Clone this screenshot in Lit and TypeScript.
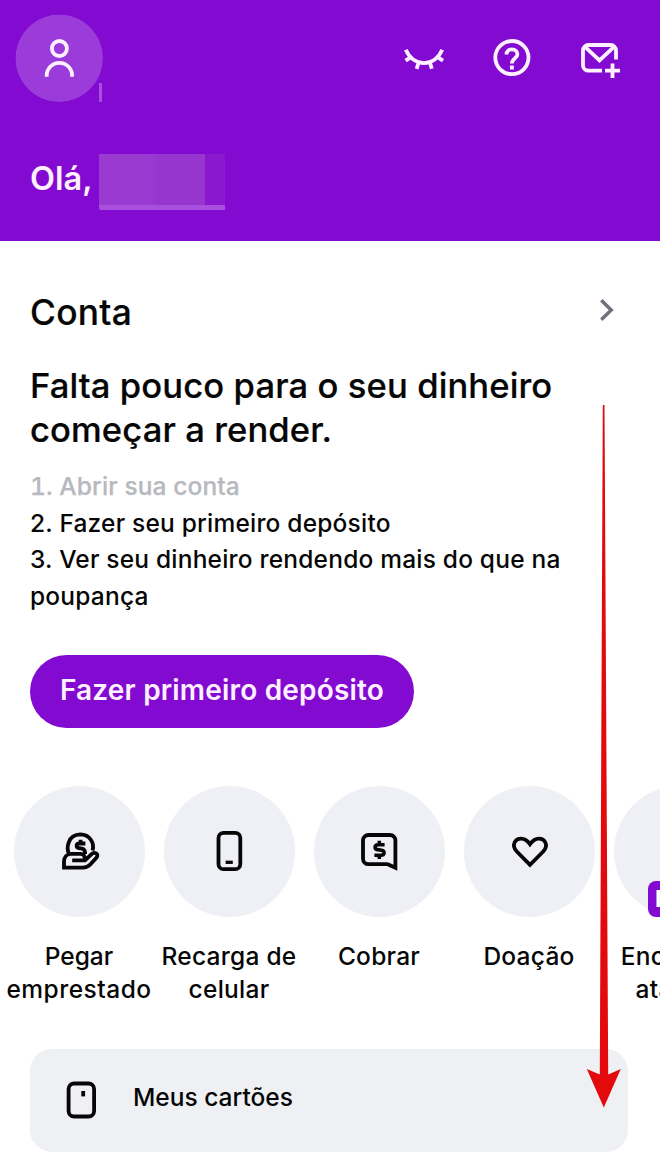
import { LitElement, html, css, svg } from "lit";
import { customElement } from "lit/decorators.js";

const loan = svg`<path d="M69 853.5C66.5 849 67 834.6 80.3 834.4C90 834.6 94.6 843 92.6 850.5"/>
  <path d="M85.4 843.5H79.5C75.8 843.5 75.8 847.8 79 848.2L82.2 848.7C85 849.2 85.2 851.5 85.2 854M80.6 839.8V843"/>
  <path d="M72.2 860.4H85L91.3 854.3C94.5 851.3 99.3 854 96.6 857.6L90.5 864.2C87.8 867 86 867.6 83 867.6H64V861.5C64 857 67 853.8 71.3 853.8H80.5C83.5 853.8 85 856 85 860"/>`;
const phone = svg`<rect x="218.5" y="832.9" width="21.8" height="36.3" rx="5"/><path d="M225.6 862.3H232.8" stroke-width="3.3"/>`;
const charge = svg`<path d="M395.4 867.8V840.5a5.5 5.5 0 0 0-5.5-5.5H368.5a5.5 5.5 0 0 0-5.5 5.5V858.7a5.5 5.5 0 0 0 5.5 5.5H386.5Q388 864.2 389.5 865Z"/>
  <path stroke-width="3.6" d="M384.6 844.8H378.2C374.2 844.8 374.2 849.2 377.5 849.6L381.5 850.2C385 850.8 385 855.2 381 855.2H374.4M379.3 840.8V844.5M379.3 855.5V859"/>`;
const heart = svg`<path d="M530 864.8L516.8 851.5C511 845.2 515 838.6 521.2 838.6C525 838.6 527.5 840.8 530 844.2C532.5 840.8 535 838.6 538.8 838.6C545 838.6 549 845.2 543.2 851.5Z"/>`;

const shortcuts = [
  { box: "14 786 131 131", icon: loan, lines: [["Pegar", "tight"], ["emprestado", "wide"]] },
  { box: "164 786 131 131", icon: phone, lines: [["Recarga de", ""], ["celular", ""]] },
  { box: "314 786 131 131", icon: charge, lines: [["Cobrar", ""]] },
  { box: "464 786 131 131", icon: heart, lines: [["Doação", ""]] },
  { box: "614 786 131 131", icon: svg``, lines: [["Encontrar", ""], ["atalhos", ""]], badge: "NOVO" },
];

@customElement("app-root")
export class AppRoot extends LitElement {
  static styles = css`
    :host { display: block; position: relative; width: 660px; height: 1173px; overflow: hidden; background: #fff; color: #060606; font-family: Inter, "Liberation Sans", sans-serif; font-weight: 500; }
    * { box-sizing: border-box; }
    svg { display: block; fill: none; stroke: currentColor; stroke-width: 3.8; }
    .t { white-space: nowrap; width: max-content; }
    header { height: 241px; background: #820ad1; color: #fff0ff; padding: 14px 39px 0 15px; }
    .bar { display: flex; align-items: center; justify-content: space-between; height: 88px; }
    .avatar { width: 88px; height: 88px; border-radius: 50%; background: radial-gradient(circle at 44.3px 44.3px, #9b3bd9 43.3px, transparent 44px); }
    .tools { display: flex; gap: 46px; }
    .hello { display: flex; align-items: flex-start; margin: 51.5px 0 0 15px; height: 57px; }
    .hello .t { font-size: 32.5px; line-height: 40px; font-weight: 600; margin-top: 5.5px; width: 69px; }
    .mask { display: grid; grid-template: 51px 5px / 106px 20px; }
    .m1 { background: linear-gradient(90deg, #993bd1 50%, #9636cf 54%); }
    .m2 { background: #8a18cf; }
    .m3 { background: #a850dd; grid-column: 1 / 3; border-radius: 0 0 0 2px; }
    .tick { position: absolute; left: 99px; top: 83px; width: 3px; height: 19px; background: #a64fdf; }
    main { padding: 49px 32px 0 30px; }
    .head { display: flex; justify-content: space-between; align-items: center; height: 44px; font-size: 35.3px; line-height: 44px; letter-spacing: 0.3px; padding-right: 10.5px; }
    .head .t { margin-top: 2px; }
    .head .t, .big .t { -webkit-text-stroke: 0.2px currentColor; }
    .chev { color: #716f7c; margin-bottom: 4px; }
    .big { font-size: 34.6px; line-height: 44px; letter-spacing: 0.1px; margin-top: 28.6px; }
    .steps { font-size: 24.5px; line-height: 36.6px; letter-spacing: 0.2px; margin-top: 17.6px; }
    .done { color: #b7b9be; font-variant-numeric: tabular-nums; letter-spacing: 0.1px; -webkit-text-stroke: 0.25px currentColor; }
    .btn { display: flex; align-items: center; justify-content: center; width: 384px; height: 73px; border-radius: 37px; background: #820ad1; color: #fff0ff; margin-top: 40.2px; font-size: 28px; line-height: 36px; letter-spacing: 0.18px; font-weight: 600; padding-bottom: 2px; }
    .row { display: flex; margin: 58.2px 0 0 -26px; width: 760px; }
    .item { width: 150px; display: flex; flex-direction: column; align-items: center; flex: none; height: 263.4px; }
    .disc { position: relative; width: 131px; height: 131px; border-radius: 50%; background: #eff0f5; margin-bottom: 23px; }
    .badge { position: absolute; left: 34px; top: 95px; height: 36.5px; width: 78px; border-radius: 8px; background: #820ad1; color: #fff; font-size: 23px; line-height: 37px; padding-left: 7.5px; font-weight: 700; }
    .label { font-size: 24.5px; line-height: 33px; letter-spacing: 0.25px; }
    .label.tight { letter-spacing: 0; }
    .label.wide { letter-spacing: 0.5px; }
    .card { display: flex; align-items: center; gap: 36px; width: 598px; height: 102.5px; border-radius: 22px; background: #eff0f4; padding: 0 0 1px 36px; font-size: 24.5px; line-height: 34px; }
    .card .t { margin-bottom: 6px; }
    .arrow { position: absolute; left: 580px; top: 400px; fill: #e20a0c; stroke: none; }
  `;

  render() {
    return html`
      <header>
        <div class="bar">
          <div class="avatar">
            <svg width="88" height="88" viewBox="15 14 88 88" stroke-width="4"><circle cx="59.4" cy="48.5" r="7.5"/><path d="M46.7 76.8V75.5a12.7 12.7 0 0 1 25.4 0V76.8"/></svg>
          </div>
          <div class="tools">
            <svg width="42" height="42" viewBox="403 37 42 42"><path d="M405.8 49.8C413.5 67.5 434.5 67.5 442.2 49.8M411.3 56.8L405.6 60.6M418.8 62L416.6 68.8M429.8 62L431.8 68.8M437.2 56.8L443 60.6"/></svg>
            <svg width="42" height="42" viewBox="491 37 42 42"><circle cx="511.9" cy="57.6" r="16.6"/><path d="M506.5 54.4c0-3.2 2.4-5 5.4-5s5.5 1.9 5.5 4.8c0 4.2-5.5 4.3-5.5 9.3M511.9 65.6V69.6"/></svg>
            <svg width="42" height="42" viewBox="579 37 42 42"><path d="M602 70.7H588.5a5.5 5.5 0 0 1-5.5-5.5V50.5a5.5 5.5 0 0 1 5.5-5.5H610.5a5.5 5.5 0 0 1 5.5 5.5V59.5M584.8 46.6L599.5 60.5L614.2 46.6M612.5 63.5V78M605 70.7H620"/></svg>
          </div>
        </div>
        <div class="hello"><div class="t">Olá,</div><div class="mask"><i class="m1"></i><i class="m2"></i><i class="m3"></i></div></div>
      </header>
      <div class="tick"></div>
      <main>
        <div class="head"><div class="t">Conta</div>
          <svg class="chev" width="20" height="26" viewBox="598 297 20 26"><path stroke-width="3.5" d="M601.3 300.3L611.2 310L601.3 319.7"/></svg></div>
        <div class="big"><div class="t">Falta pouco para o seu dinheiro</div><div class="t">começar a render.</div></div>
        <div class="steps">
          <div class="t done">1. Abrir sua conta</div>
          <div class="t">2. Fazer seu primeiro depósito</div>
          <div class="t">3. Ver seu dinheiro rendendo mais do que na</div>
          <div class="t">poupança</div>
        </div>
        <div class="btn"><div class="t">Fazer primeiro depósito</div></div>
        <div class="row">
          ${shortcuts.map((s) => html`<div class="item">
            <div class="disc"><svg width="131" height="131" viewBox=${s.box}>${s.icon}</svg>${s.badge ? html`<div class="badge">${s.badge}</div>` : ""}</div>
            ${s.lines.map(([text, cls]) => html`<div class="t label ${cls}">${text}</div>`)}
          </div>`)}
        </div>
        <div class="card">
          <svg width="31" height="40" viewBox="66 1080 31 40"><rect x="68.6" y="1083.5" width="25.5" height="33" rx="5.5"/><path d="M83.2 1091V1096.4"/></svg>
          <div class="t">Meus cartões</div>
        </div>
      </main>
      <svg class="arrow" width="48" height="712" viewBox="580 400 48 712"><path d="M602.8 405H604.5L608.2 1074.5L620.8 1069L603.8 1107.5L586.8 1069L599.8 1074.5Z"/></svg>
    `;
  }
}
